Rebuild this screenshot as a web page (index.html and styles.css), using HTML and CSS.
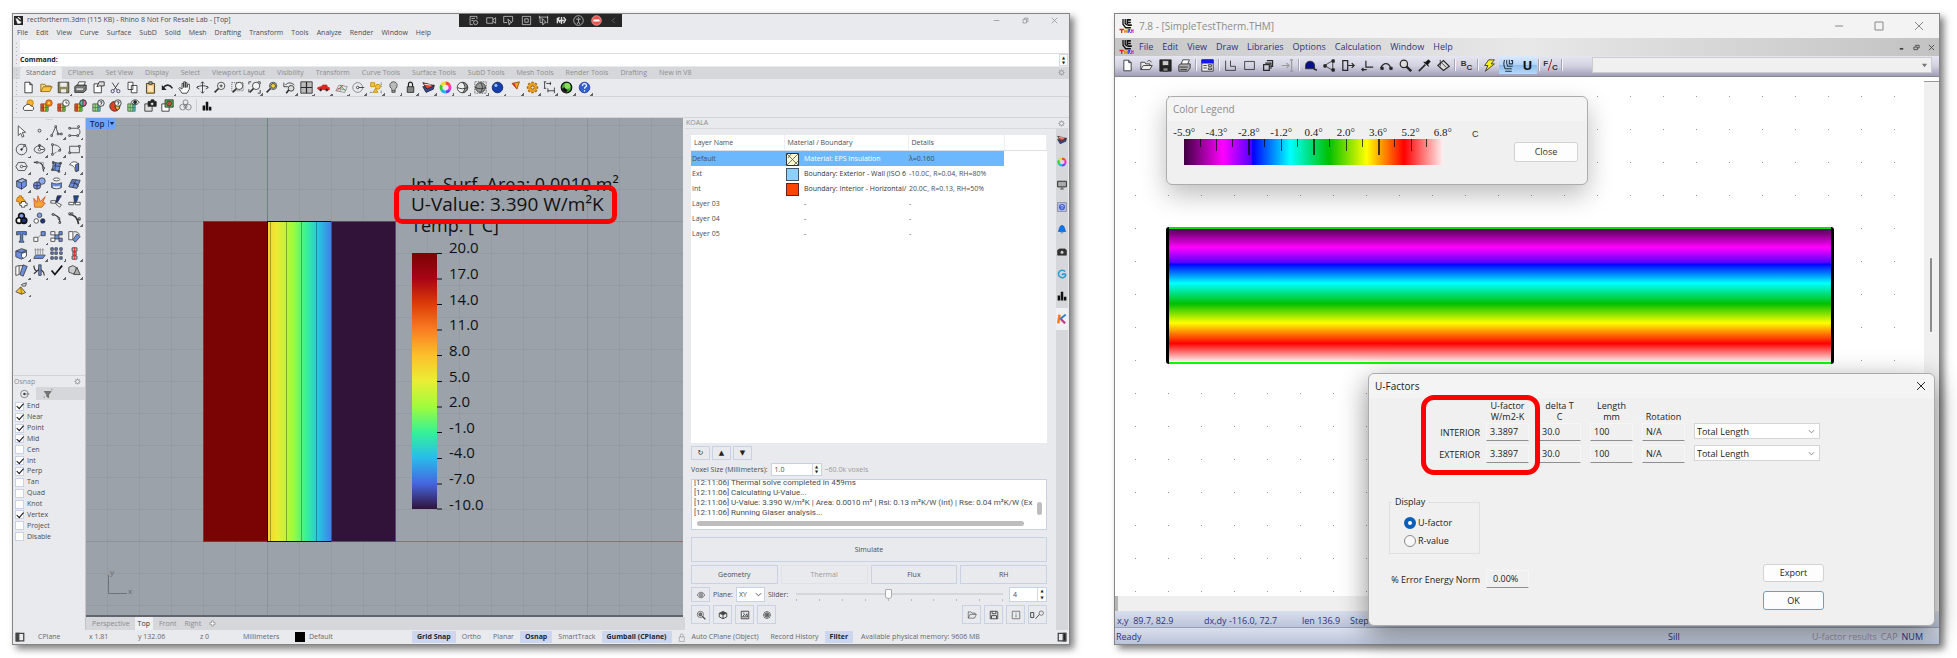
FILE: index.html
```html
<!DOCTYPE html>
<html lang="en">
<head>
<meta charset="utf-8">
<title>U-Value comparison: Rhino and THERM</title>
<link rel="stylesheet" href="styles.css">
</head>
<body>
<svg class="defs" aria-hidden="true">
  <symbol id="gear" viewBox="0 0 16 16"><circle cx="8" cy="8" r="4.500" fill="none" stroke="#999" stroke-width="2"/><path d="M8 1v3M8 12v3M1 8h3M12 8h3M3 3l2 2M11 11l2 2M13 3l-2 2M5 11l-2 2" stroke="#999" stroke-width="2"/></symbol>
  <symbol id="lens" viewBox="0 0 16 16"><circle cx="10" cy="6" r="4.500" fill="#f4f4f4" stroke="#333"/><path d="M6.800 9.200L2 14" stroke="#333" stroke-width="2"/></symbol>
  <symbol id="sheet" viewBox="0 0 16 16"><path d="M3.500 1.500h6l3 3v10h-9zM9.500 1.500v3h3" fill="#fff" stroke="#222"/></symbol>
  <symbol id="bars" viewBox="0 0 16 16"><path d="M1 7h4v8H1zM6 1h4v14H6zM11 9h4v6h-4z" fill="#111"/></symbol>
  <symbol id="mesh" viewBox="0 0 16 16"><path d="M1 6h9v9H1z" fill="#f4c531" stroke="#555"/><path d="M1 6h4v9H1z" fill="#d8452a"/><path d="M7 6h3v9H7z" fill="#4cb62e"/><path d="M1 10.500h9M4 6v9M7 6v9" stroke="#555" stroke-width=".7"/></symbol>
  <symbol id="coolmesh" viewBox="0 0 16 16"><path d="M1 6h9v9H1z" fill="#8edb7a" stroke="#555"/><path d="M7 6h3v9H7z" fill="#4ca8b0"/><path d="M1 10.500h9M4 6v9M7 6v9" stroke="#555" stroke-width=".7"/></symbol>
  <symbol id="wheel" viewBox="0 0 16 16"><g fill="none" stroke-width="3.500"><path d="M8 2.500a5.500 5.500 0 0 1 4.760 2.750" stroke="#f43"/><path d="M12.760 5.250a5.500 5.500 0 0 1 0 5.500" stroke="#f3b"/><path d="M12.760 10.750A5.500 5.500 0 0 1 8 13.500" stroke="#64f"/><path d="M8 13.500a5.500 5.500 0 0 1-4.760-2.750" stroke="#1bd"/><path d="M3.240 10.750a5.500 5.500 0 0 1 0-5.500" stroke="#3c3"/><path d="M3.240 5.250A5.500 5.500 0 0 1 8 2.500" stroke="#ed2"/></g></symbol>
  <symbol id="layers" viewBox="0 0 16 16"><path d="M1 7l4 7 9-4 1-5z" fill="#334a9a" stroke="#222"/><path d="M1 2l5 8 9-4-6-2z" fill="#e8452c" stroke="#222"/><path d="M3 4l8 1" stroke="#fff"/></symbol>
  <symbol id="lock" viewBox="0 0 16 16"><path d="M4 7h8v7H4z" fill="#888" stroke="#222"/><path d="M5.500 7V4a2.500 2.500 0 0 1 5 0v3" fill="none" stroke="#222" stroke-width="1.500"/></symbol>
  <symbol id="down" viewBox="0 0 8 8"><path d="M1 2.500L4 5.500 7 2.500" fill="none" stroke="currentColor"/></symbol>
  <symbol id="thermlogo" viewBox="0 0 16 16"><path d="M4 0v6l3 4h6M6.500 0v5l2 2" fill="none" stroke="#111" stroke-width="1.500"/><path d="M9 1h4M9 0v6M9 4h4M9 7h5" fill="none" stroke="#111" stroke-width="1.800"/><path d="M0 12h5M2.500 12v4" stroke="#e22" stroke-width="1.500"/><path d="M6 12v4M8.500 12v4M6 14h2.500" stroke="#d80" stroke-width="1.300"/><path d="M10 16v-4h2l-1 2 2 2" stroke="#22e" fill="none"/><path d="M13.500 16v-4l1 2 1-2v4" stroke="#c2c" fill="none"/></symbol>
</svg>

<main class="desk">
<section class="win rhino">
  <header class="r-title">
    <svg class="app" viewBox="0 0 16 16"><path d="M0 0h16v16H0z" fill="#222"/><path d="M2 3l5 2 2 3 5 2-3 4H6L4 9z" fill="#fff"/><path d="M7 2l5 4" stroke="#fff" stroke-width="2"/></svg>
    <span class="grow">rectfortherm.3dm (115 KB) - Rhino 8 Not For Resale Lab - [Top]</span>
    <div class="controls">
      <button aria-label="Minimize"><svg viewBox="0 0 10 10"><path d="M1 5h8"/></svg></button>
      <button aria-label="Restore"><svg viewBox="0 0 10 10"><path d="M1.500 3.500h5v5h-5zM3.500 3V1.500h5v5H7"/></svg></button>
      <button aria-label="Close"><svg viewBox="0 0 10 10"><path d="M1 1l8 8M9 1L1 9"/></svg></button>
    </div>
  </header>
  <div class="recorder">
    <svg viewBox="0 0 16 16"><path d="M13 6V2H3v12h4M5 5h5M5 8h3"/><circle cx="11" cy="11" r="3"/></svg>
    <svg viewBox="0 0 16 16"><path d="M1 4h9v8H1zM10 7l4-3v8l-4-3"/></svg>
    <svg viewBox="0 0 16 16"><path d="M6 11H1V2h13v8M7 6l6 5-3 .500-1 3z"/></svg>
    <svg viewBox="0 0 16 16"><path d="M2 2h12v12H2zM5.500 5.500h5v5h-5z"/></svg>
    <svg viewBox="0 0 16 16"><path d="M2 3h12v9M2 1v4M14 1v4M3 3v8h3M6 5l6 6-3 .500-2 3z"/></svg>
    <svg viewBox="0 0 16 16" class="bold"><path d="M2 4v8M5 3l-2 3 3 5M8 3v10M11 3l3 4-3 5M4 8h8"/></svg>
    <svg viewBox="0 0 16 16"><circle cx="8" cy="8" r="7"/><path d="M8 3v2M4.500 6h7M8 6v4M6 13l2-3 2 3"/></svg>
    <svg viewBox="0 0 16 16"><circle cx="8" cy="8" r="7" fill="#e8554d" stroke="#f6c0bc"/><path d="M3.500 8h9" stroke="#fff" stroke-width="3"/></svg>
    <svg viewBox="0 0 16 16" class="dim"><path d="M10 4L6 8l4 4"/></svg>
  </div>
  <nav class="r-menu"><a href="#">File</a><a href="#">Edit</a><a href="#">View</a><a href="#">Curve</a><a href="#">Surface</a><a href="#">SubD</a><a href="#">Solid</a><a href="#">Mesh</a><a href="#">Drafting</a><a href="#">Transform</a><a href="#">Tools</a><a href="#">Analyze</a><a href="#">Render</a><a href="#">Window</a><a href="#">Help</a></nav>
  <div class="command">
    <i class="grip"></i>
    <div class="cmd-box">
      <div class="cmd-history"></div>
      <div class="cmd-line"><label for="cmd">Command:</label><input id="cmd" type="text"><span class="spin"><button aria-label="Up">▲</button><button aria-label="Down">▼</button></span></div>
    </div>
  </div>
  <div class="r-tabs"><i class="grip"></i><button class="on">Standard</button><button>CPlanes</button><button>Set View</button><button>Display</button><button>Select</button><button>Viewport Layout</button><button>Visibility</button><button>Transform</button><button>Curve Tools</button><button>Surface Tools</button><button>SubD Tools</button><button>Mesh Tools</button><button>Render Tools</button><button>Drafting</button><button>New in V8</button><svg class="gear"><use href="#gear"/></svg></div>
  <div class="tools first"><i class="grip"></i>
    <div class="strip std">
      <button aria-label="New"><svg><use href="#sheet"/></svg></button>
      <button aria-label="Open"><svg viewBox="0 0 16 16"><path d="M1 13V4h5l1 2h6v2" fill="#f7e08a" stroke="#8a6410"/><path d="M1 13l3-6h11l-3 6z" fill="#f9c440" stroke="#8a6410"/></svg></button>
      <button aria-label="Save" class="f"><svg viewBox="0 0 16 16"><path d="M1.500 1.500h13v13h-13z" fill="#8e8a5e" stroke="#333"/><path d="M4 2h8v5H4zM5 10h6v4H5z" fill="#eee" stroke="none"/></svg></button>
      <button aria-label="Print"><svg viewBox="0 0 16 16"><path d="M4 6l2-5h8l-2 5" fill="#fff" stroke="#333"/><path d="M1 7l2-2h12v6l-3 3H1z" fill="#777" stroke="#222"/><path d="M3 9h8v2H3z" fill="#ddd" stroke="none"/></svg></button>
      <button aria-label="Properties"><svg viewBox="0 0 16 16"><path d="M2.500 3.500h9v11h-9z" fill="#fff" stroke="#222"/><path d="M9 1h6v5H9l-3 1z" fill="#ddd" stroke="#222"/></svg></button>
      <button aria-label="Cut"><svg viewBox="0 0 16 16"><path d="M4 2l6 9M12 2L6 11" stroke="#222"/><circle cx="4.500" cy="12.500" r="2" stroke="#336"/><circle cx="11.500" cy="12.500" r="2" stroke="#336"/></svg></button>
      <button aria-label="Copy"><svg viewBox="0 0 16 16"><path d="M2.500 1.500h6v9h-6zM6.500 5.500h7v9h-7z" fill="#fff"/></svg></button>
      <button aria-label="Paste"><svg viewBox="0 0 16 16"><path d="M3 3h10v12H3z" fill="#f3c64e"/><path d="M6 1h4v3H6z" fill="#aaa"/><path d="M5 6h6v7H5z" fill="#fbe9b4" stroke="none"/></svg></button>
      <button aria-label="Undo" class="f"><svg viewBox="0 0 16 16"><path d="M3 8c3-4 8-4 11 1" stroke-width="2"/><path d="M1 5v6h6z" fill="#222" stroke="none"/></svg></button>
      <button aria-label="Pan"><svg viewBox="0 0 16 16"><path d="M5 15L1 9l1-1 3 2V3h2v5V1h2v7V2h2v6l1-4h2v6l-3 5z" fill="#fff"/></svg></button>
      <button aria-label="Rotate view"><svg viewBox="0 0 16 16"><path d="M8 1v14M1 8c4-3 10-3 14 0M6 3l2-2 2 2M6 13l2 2 2-2M3 6L1 8l3 2M13 6l2 2-3 2"/></svg></button>
      <button aria-label="Zoom"><svg viewBox="0 0 16 16"><use href="#lens"/><path d="M8 6h4M10 4v4"/></svg></button>
      <button aria-label="Zoom window"><svg viewBox="0 0 16 16"><path d="M1 2h14v10H1z" stroke-dasharray="1 1.500"/><use href="#lens"/></svg></button>
      <button aria-label="Zoom extents" class="f"><svg viewBox="0 0 16 16"><use href="#lens"/><path d="M1 4V1h3M12 1h3v3M15 11v4h-3M1 10v4"/></svg></button>
      <button aria-label="Zoom selected"><svg viewBox="0 0 16 16"><use href="#lens"/><circle cx="10" cy="6" r="3" fill="#f1d32f"/></svg></button>
      <button aria-label="Undo view" class="f"><svg viewBox="0 0 16 16"><path d="M3 5c3-4 8-3 11 0M1 2v5h5"/><circle cx="10" cy="9" r="3.500" fill="#ddd"/><path d="M7 11l-3 4" stroke-width="2"/></svg></button>
      <button aria-label="Four views" class="f"><svg viewBox="0 0 16 16"><path d="M1 1h14v14H1z" fill="#bbb"/><path d="M8 1v14M1 8h14" stroke-width="1.500"/></svg></button>
      <button aria-label="Named view" class="f"><svg viewBox="0 0 16 16"><path d="M1 10V8l4-1 2-2h5l1 3h2v3z" fill="#e0251c" stroke="#c22"/><circle cx="4.500" cy="11" r="1.200" fill="#222"/><circle cx="12" cy="11" r="1.200" fill="#222"/></svg></button>
      <button aria-label="Set CPlane" class="f"><svg viewBox="0 0 16 16"><path d="M1 12L5 5l10 2-3 7zM3 9l10 2M8 6l-2 7" stroke="#888"/><path d="M2 12l8-7" stroke="#c33"/><path d="M6 5l7 7" stroke="#393"/></svg></button>
      <button aria-label="Object snap" class="f"><svg viewBox="0 0 16 16"><circle cx="7" cy="8" r="6" stroke="#777"/><path d="M7 8h8"/><circle cx="7" cy="8" r="1.500" fill="#fff"/></svg></button>
      <button aria-label="Select" class="f"><svg viewBox="0 0 16 16"><path d="M2 2h5v5H2zM5 14l3-5 3 5z" fill="#f5c52f" stroke="#c08a00"/><circle cx="11" cy="7" r="3" fill="#f5c52f" stroke="#c08a00"/><path d="M1 14h4M15 2v5M15 12v3" stroke-dasharray="1 1"/></svg></button>
      <button aria-label="Lights" class="f"><svg viewBox="0 0 16 16"><path d="M6 10C2 7 3 1 8 1s6 6 2 9v4H6z" fill="#bbb" stroke="#444"/><path d="M6 12h4" stroke="#333"/></svg></button>
      <button aria-label="Lock" class="f"><svg><use href="#lock"/></svg></button>
      <button aria-label="Layers" class="f"><svg><use href="#layers"/></svg></button>
      <button aria-label="Colors" class="f"><svg><use href="#wheel"/></svg></button>
      <button aria-label="Shaded" class="f"><svg viewBox="0 0 16 16"><circle cx="8" cy="8" r="6.500" fill="#eee"/><path d="M8 2c4 3 4 9 0 12a6 6 0 0 0 0-12z" fill="#aaa"/><path d="M2 8c3 2 9 2 12 0"/></svg></button>
      <button aria-label="Rendered" class="f"><svg viewBox="0 0 16 16"><path d="M1 1h14v14H1z" stroke-dasharray="1 1"/><circle cx="8" cy="8" r="6" fill="#999"/><path d="M2 8c3 2 9 2 12 0M8 2c3 3 3 9 0 12"/></svg></button>
      <button aria-label="Render" class="f"><svg viewBox="0 0 16 16"><circle cx="8" cy="8" r="6.500" fill="#163fae" stroke="#0a1c55"/><circle cx="6" cy="5.500" r="2" fill="#8fc0ff" stroke="none"/></svg></button>
      <button aria-label="Spotlight" class="f"><svg viewBox="0 0 16 16"><path d="M5 3l9-2-3 9z" fill="#f2a81d" stroke="#8a4a00"/><path d="M5 3l3-1 3 8z" fill="#d33" stroke="none"/></svg></button>
      <button aria-label="Options" class="f"><svg viewBox="0 0 16 16"><path d="M8 1v14M1 8h14M3 3l10 10M13 3L3 13" stroke="#a8690c" stroke-width="3"/><circle cx="8" cy="8" r="4.500" fill="#f0a629" stroke="#e89b1e" stroke-width="2"/><circle cx="8" cy="8" r="2" fill="#e9eaee" stroke="#7a4a00"/></svg></button>
      <button aria-label="Dimension" class="f"><svg viewBox="0 0 16 16"><path d="M2 1v8M1 1h3M1 9h3M4 3h6M9 1v4M6 9v5M14 8v7M6 12h8"/></svg></button>
      <button aria-label="Grasshopper" class="f"><svg viewBox="0 0 16 16"><circle cx="8" cy="8" r="6.500" fill="#3da52e" stroke="#111" stroke-width="1.500"/><path d="M2 10l4-2 3 4-3 2z" fill="#111"/><circle cx="9" cy="6" r="3.500" fill="#8fdc5e" stroke="none"/></svg></button>
      <button aria-label="Help" class="f"><svg viewBox="0 0 16 16"><circle cx="8" cy="8" r="6.500" fill="#3561d8" stroke="#1b3182"/><path d="M5.500 6c0-4 5-3 5-.500 0 2-2.500 2-2.500 4M8 11.500V13" stroke="#fff" stroke-width="1.500"/></svg></button>
    </div>
  </div>
  <div class="tools"><i class="grip"></i>
    <div class="strip ten">
      <button aria-label="Sun"><svg viewBox="0 0 16 16"><circle cx="10" cy="5" r="4" fill="#f9b52a" stroke="#c77d00"/><path d="M3 14a3 3 0 0 1 1-5.500 4 4 0 0 1 7 0 3 3 0 0 1 2 5.500z" fill="#fff"/></svg></button>
      <button aria-label="Sun study"><svg viewBox="0 0 16 16"><use href="#mesh"/><circle cx="11" cy="5" r="4" fill="#f58220" stroke="#a84a00"/><circle cx="11" cy="5" r="1.500" fill="#ffd34a" stroke="none"/></svg></button>
      <button aria-label="Hourly study"><svg viewBox="0 0 16 16"><use href="#mesh"/><circle cx="11" cy="5" r="4" fill="#fff"/><path d="M11 3v2h2"/></svg></button>
      <button aria-label="Color study"><svg viewBox="0 0 16 16"><use href="#mesh"/><circle cx="11" cy="5" r="4" fill="#48c9a0"/><path d="M11 1a4 4 0 0 1 0 8z" fill="#ef6a9b"/></svg></button>
      <button aria-label="Scheduled study"><svg viewBox="0 0 16 16"><use href="#coolmesh"/><circle cx="11" cy="5" r="4" fill="#eee"/><path d="M9.500 3.500h3L11 7"/></svg></button>
      <button aria-label="Peak study"><svg viewBox="0 0 16 16"><circle cx="7" cy="9" r="6" fill="#e2401f"/><path d="M7 9l6-2a6 6 0 0 1-3 7z" fill="#f4b22c"/><circle cx="11" cy="5" r="4" fill="#eee"/><path d="M9.500 3.500h3L11 7"/></svg></button>
      <button aria-label="View study"><svg viewBox="0 0 16 16"><use href="#coolmesh"/><path d="M5 4c3-4 7-4 10 0-3 4-7 4-10 0z" fill="#eee"/><circle cx="10" cy="4" r="1.800" fill="#222"/></svg></button>
      <button aria-label="Capture"><svg viewBox="0 0 16 16"><path d="M1 6h9v9H1z" fill="#ddd"/><path d="M5 3h3l1-2h3l1 2h2v6H5z" fill="#222"/><circle cx="10" cy="6" r="2" fill="#eee"/></svg></button>
      <button aria-label="Capture color"><svg viewBox="0 0 16 16"><path d="M1 6h9v9H1z" fill="#fff"/><path d="M5 1h10v9H5z" fill="#57b84b"/><circle cx="10" cy="5.500" r="3" fill="#ef6a3b"/><circle cx="10" cy="5.500" r="1" fill="#fff"/></svg></button>
      <button aria-label="Blend"><svg viewBox="0 0 16 16"><g stroke="#777"><circle cx="8" cy="4" r="3"/><circle cx="4.500" cy="10" r="3.500"/><circle cx="11.500" cy="10" r="3.500"/><circle cx="8" cy="9" r="2"/></g></svg></button>
    </div>
    <i class="rule"></i>
    <button class="solo" aria-label="Charts"><svg><use href="#bars"/></svg></button>
  </div>

  <div class="work">
    <aside class="side">
      <div class="dots">····</div>
      <div class="palette">
        <button aria-label="Pointer"><svg viewBox="0 0 16 16"><path d="M4 1v12l3-3 2 5 2-1-2-5h4z" fill="#fff"/></svg></button>
        <button aria-label="Point" class="f"><svg viewBox="0 0 16 16"><circle cx="8" cy="7" r="1.800"/></svg></button>
        <button aria-label="Polyline" class="f"><svg viewBox="0 0 16 16"><path d="M2 13L7 2l3 9h4"/><path d="M1 12h2v2H1zM6 1h2v2H6zM9 10h2v2H9zM13 10h2v2h-2z" fill="#fff"/></svg></button>
        <button aria-label="Curve" class="f"><svg viewBox="0 0 16 16"><path d="M2 4h9c5 0 5 9 0 9H3"/><path d="M1 3h2v2H1zM12 1h2v2h-2zM1 12h2v2H1zM11 12h2v2h-2z" fill="#fff"/></svg></button>
        <button aria-label="Circle" class="f"><svg viewBox="0 0 16 16"><circle cx="8" cy="8" r="6.500"/><path d="M8 8l4-5"/><circle cx="8" cy="8" r="1" fill="#222"/><path d="M11 2h2v2h-2z" fill="#fff"/></svg></button>
        <button aria-label="Ellipse" class="f"><svg viewBox="0 0 16 16"><ellipse cx="8" cy="8" rx="6.500" ry="4.500"/><path d="M8 3v5h6M7 2h2v2H7z"/><circle cx="8" cy="8" r="1.500" fill="#fff"/></svg></button>
        <button aria-label="Arc" class="f"><svg viewBox="0 0 16 16"><path d="M3 2c8 0 12 6 9 7M3 2v12"/><path d="M3 14l9-5" stroke-dasharray="1 1"/><path d="M2 1h2v2H2zM11 8h2v2h-2zM2 13h2v2H2z" fill="#fff"/></svg></button>
        <button aria-label="Rectangle" class="f"><svg viewBox="0 0 16 16"><path d="M2 4h12v8H2z"/><path d="M1 11h2v2H1zM13 3h2v2h-2z" fill="#fff"/></svg></button>
        <button aria-label="Polygon" class="f"><svg viewBox="0 0 16 16"><path d="M4 3h8l3 5-3 5H4L1 8z"/><path d="M8 8h6"/><circle cx="8" cy="8" r="1.500" fill="#fff"/></svg></button>
        <button aria-label="Fillet" class="f"><svg viewBox="0 0 16 16"><path d="M1 3h5c5 0 7 3 7 11" stroke-width="1.500"/><path d="M6 3h7v6" stroke="#999"/><path d="M4 2h2v2H4zM12 9h2v2h-2z" fill="#fff"/></svg></button>
        <button aria-label="Surface" class="f"><svg viewBox="0 0 16 16"><path d="M4 3l9 1-2 10-8-2z" fill="#6d8fe0"/><path d="M3 2h2v2H3zM12 3h2v2h-2zM10 13h2v2h-2zM2 11h2v2H2zM5 7l8 1M7 3l-1 9"/></svg></button>
        <button aria-label="Revolve" class="f"><svg viewBox="0 0 16 16"><path d="M2 6c2-5 10-5 11 0v7l-4 1c0-5-3-8-7-8z" fill="#fff"/><path d="M9 6l4-2v9l-3 1z" fill="#5477d4"/></svg></button>
        <button aria-label="Box" class="f"><svg viewBox="0 0 16 16"><path d="M2 5l7-3 5 2v7l-6 4-6-3z" fill="#6d8fe0"/><path d="M2 5l6 2 6-3-5-2z" fill="#a9c0f5"/><path d="M8 7v8"/></svg></button>
        <button aria-label="Spheres" class="f"><svg viewBox="0 0 16 16"><circle cx="11" cy="5" r="4" fill="#8fabef"/><circle cx="5" cy="10.500" r="4.500" fill="#6d8fe0"/><path d="M1 10c3 1 6 1 8 0M5 6v9"/></svg></button>
        <button aria-label="Cylinder" class="f"><svg viewBox="0 0 16 16"><ellipse cx="8" cy="3" rx="4" ry="1.800" fill="#fff"/><path d="M2 7c3 2 9 2 12 0v6c-3 2-9 2-12 0z" fill="#6d8fe0"/><path d="M4 11c3 1 5 1 8 0v2c-3 1-5 1-8 0z" fill="#fff" stroke="none"/></svg></button>
        <button aria-label="Plane" class="f"><svg viewBox="0 0 16 16"><path d="M5 3l10 1-4 10-10-2z" fill="#6d8fe0"/><path d="M3 7l10 2M10 3L6 13M5 4l8 8"/></svg></button>
        <button aria-label="Boolean" class="f"><svg viewBox="0 0 16 16"><path d="M3 3h2V1h3v2h2v3h2v3h-3v2H5V8H2V6z" fill="#f5a623" stroke="#b06a00"/><path d="M8 8h5v2h2v3h-3v2H8v-2H6v-3h2z" fill="#fff"/></svg></button>
        <button aria-label="Explode"><svg viewBox="0 0 16 16"><path d="M2 15L1 4l4 5 1-8 3 7 6-6-3 7 3 1-4 5z" fill="#f4a437" stroke="#d2552a"/></svg></button>
        <button aria-label="Trim"><svg viewBox="0 0 16 16"><path d="M9 1h5L9 9H7z" fill="#1c2f80"/><path d="M1 7h6v3H1zM8 9l6 3-2 3-5-4z" fill="#fff"/></svg></button>
        <button aria-label="Split"><svg viewBox="0 0 16 16"><path d="M7 1h6l-3 9H8z" fill="#1c4a9a"/><path d="M1 9h6v3H1zM9 9h6v3H9z" fill="#fff"/></svg></button>
        <button aria-label="Group" class="f"><svg viewBox="0 0 16 16"><g stroke="#111" stroke-width="2"><circle cx="8" cy="5" r="3.500" fill="#7fa0ee"/><circle cx="5" cy="10.500" r="3.500" fill="#fff"/><circle cx="11" cy="10.500" r="3.500" fill="#1c2f80"/></g></svg></button>
        <button aria-label="Ungroup"><svg viewBox="0 0 16 16"><circle cx="8" cy="4" r="2.800" fill="#7fa0ee"/><circle cx="4" cy="11" r="2.800" fill="#fff"/><circle cx="12" cy="11" r="2.800" fill="#1c2f80"/></svg></button>
        <button aria-label="Edit points"><svg viewBox="0 0 16 16"><path d="M2 3c6 0 11 4 10 11" stroke-width="1.500"/><path d="M3 2h2v2H3zM10 7h2v2h-2zM11 12h2v2h-2z" fill="#fff"/></svg></button>
        <button aria-label="Control points" class="f"><svg viewBox="0 0 16 16"><path d="M1 3c7 0 11 4 12 12" stroke-width="2"/><path d="M1 1h2v2H1zM4 1h2v2H4zM10 9h5M13 7h2v3h-2z" fill="#fff"/></svg></button>
        <button aria-label="Text"><svg viewBox="0 0 16 16"><path d="M2 2h12v4h-2l-1-1H9.500v8l1.500 1v1H5v-1l1.500-1V5H5L4 6H2z" fill="#5b82e0"/></svg></button>
        <button aria-label="Move" class="f"><svg viewBox="0 0 16 16"><path d="M1 9h5v5H1z" fill="#fff"/><path d="M10 2h5v5h-5z" fill="#6d8fe0"/><path d="M6 9l4-3" stroke-dasharray="1 1"/></svg></button>
        <button aria-label="Copy objects"><svg viewBox="0 0 16 16"><path d="M1 2h5v4H1zM1 10h5v4H1z" fill="#fff"/><path d="M6 6h5v5H6zM11 2h4v4h-4zM11 10h4v4h-4z" fill="#6d8fe0"/></svg></button>
        <button aria-label="Rotate"><svg viewBox="0 0 16 16"><path d="M1 2h5v10H1z" fill="#fff"/><path d="M11 5l4 3-6 7-3-3z" fill="#6d8fe0"/><path d="M7 2c4 0 6 1 7 4"/></svg></button>
        <button aria-label="Solid edit" class="f"><svg viewBox="0 0 16 16"><path d="M1 5l7-3 6 2v7l-6 4-7-3z" fill="#6d8fe0"/><path d="M8 8l6-2v5l-3 3-3-2z" fill="#fff"/><path d="M1 5l7 2 6-3"/></svg></button>
        <button aria-label="Extrude" class="f"><svg viewBox="0 0 16 16"><path d="M3 10h12l-3 4H1z" fill="#6d8fe0"/><path d="M3 11V3M6 11V3M9 11V3M12 11V3M2 4l1-2 1 2M5 4l1-2 1 2M8 4l1-2 1 2M11 4l1-2 1 2" stroke="#888"/></svg></button>
        <button aria-label="Array" class="f"><svg viewBox="0 0 16 16"><path d="M1 1h3v3H1zM6 1h3v3H6zM12 1h3v3h-3zM1 6h3v3H1zM6 6h3v3H6zM12 6h3v3h-3zM1 12h3v3H1zM6 12h3v3H6zM12 12h3v3h-3z" fill="#6d8fe0"/></svg></button>
        <button aria-label="Align" class="f"><svg viewBox="0 0 16 16"><path d="M5 1h6v4H5zM6 6h4v4H6zM5 11h6v4H5z" fill="#bbb"/><path d="M8 0v16" stroke="#e22"/></svg></button>
        <button aria-label="Shear" class="f"><svg viewBox="0 0 16 16"><path d="M1 3l4-1v11l-4 1z" fill="#fff"/><path d="M10 1l5 2-5 12-4-2z" fill="#6d8fe0"/><path d="M5 2h5"/></svg></button>
        <button aria-label="Curve tools" class="f"><svg viewBox="0 0 16 16"><path d="M1 2c1 8 5 8 7 3 2 4 6 3 6 9M1 12l6-5" stroke-width="1.500"/><path d="M7 1h3v13H7z" fill="#6d8fe0"/></svg></button>
        <button aria-label="Check" class="f"><svg viewBox="0 0 16 16"><path d="M2 8l4 5 9-11" stroke="#111" stroke-width="2"/></svg></button>
        <button aria-label="Solids" class="f"><svg viewBox="0 0 16 16"><path d="M1 4l5-2 4 2v6l-4 2-5-2z" fill="#ccc"/><path d="M11 4l4 9H7z" fill="#aaa"/></svg></button>
        <button aria-label="Pyramid" class="f"><svg viewBox="0 0 16 16"><path d="M7 6l6 7-5 2-7-3z" fill="#f4c531"/><path d="M7 6l1 9" stroke="#8a6410"/><path d="M8 3l6-2-1 4H9z" fill="#ddd"/></svg></button>
      </div>
      <section class="osnap">
        <header>Osnap<svg class="gear"><use href="#gear"/></svg></header>
        <div class="osnap-tabs"><button class="on" aria-label="Snaps"><svg viewBox="0 0 16 16"><circle cx="7" cy="8" r="6"/><circle cx="7" cy="8" r="1.500" fill="#222"/><path d="M8 8h7"/></svg></button><button aria-label="Filter"><svg viewBox="0 0 16 16"><path d="M2 4h11L9 9v5l-3-2V9z" fill="#777"/><path d="M1 13h2M13 1h2"/></svg></button></div>
        <div class="checks">
          <label><input type="checkbox" checked>End</label><label><input type="checkbox" checked>Near</label><label><input type="checkbox" checked>Point</label><label><input type="checkbox" checked>Mid</label><label><input type="checkbox">Cen</label><label><input type="checkbox" checked>Int</label><label><input type="checkbox" checked>Perp</label><label><input type="checkbox">Tan</label><label><input type="checkbox">Quad</label><label><input type="checkbox">Knot</label><label><input type="checkbox" checked>Vertex</label><label><input type="checkbox">Project</label><label><input type="checkbox">Disable</label>
        </div>
      </section>
    </aside>

    <div class="center">
      <div class="viewport">
        <svg class="scene" role="img" aria-label="Thermal section with temperature legend">
          <defs>
            <pattern id="minor" x="21" y="7" width="32" height="32" patternUnits="userSpaceOnUse"><path d="M.500 0v32M0 .500h32" stroke="#969ba3"/></pattern>
            <pattern id="major" x="181" y="103" width="320" height="320" patternUnits="userSpaceOnUse"><path d="M.500 0v320M0 .500h320" stroke="#8e939b"/></pattern>
            <linearGradient id="section"><stop offset="0" stop-color="#f5d22f"/><stop offset=".14" stop-color="#eeea33"/><stop offset=".4" stop-color="#9dfb3d"/><stop offset=".6" stop-color="#38f295"/><stop offset=".8" stop-color="#27c4e4"/><stop offset="1" stop-color="#417fe6"/></linearGradient>
            <linearGradient id="scale" x2="0" y2="1"><stop offset="0" stop-color="#7a0403"/><stop offset=".1" stop-color="#a80416"/><stop offset=".2" stop-color="#dd3d08"/><stop offset=".3" stop-color="#f97e22"/><stop offset=".4" stop-color="#fbc02b"/><stop offset=".5" stop-color="#eaee35"/><stop offset=".6" stop-color="#a1fb3c"/><stop offset=".7" stop-color="#35f296"/><stop offset=".8" stop-color="#28bceb"/><stop offset=".9" stop-color="#4666e0"/><stop offset="1" stop-color="#30123b"/></linearGradient>
          </defs>
          <rect width="100%" height="100%" fill="url(#minor)" stroke="none"/>
          <rect width="100%" height="100%" fill="url(#major)" stroke="none"/>
          <path d="M181.500 0v103" stroke="#4d9a55"/>
          <path d="M310 423.500h2000" stroke="#a0686d"/>
          <rect x="117.500" y="103.500" width="64" height="320" fill="#7a0403" stroke="#c2152b"/>
          <rect x="181.500" y="103.500" width="64" height="320" fill="url(#section)" stroke="#111"/>
          <path d="M184.500 104v319M200.500 104v319M215.500 104v319M230.500 104v319" stroke="#000" stroke-opacity=".3"/>
          <rect x="245.500" y="103.500" width="64" height="320" fill="#311239" stroke="#7a2bb5"/>
          <rect x="326" y="135" width="25" height="256" fill="url(#scale)" stroke="none"/>
          <path d="M351 135.500h5M351 161h5M351 186.500h5M351 212h5M351 237.500h5M351 263.500h5M351 289h5M351 314.500h5M351 340.500h5M351 366h5M351 391h5" stroke="#111"/>
          <path d="M22.500 457v18.500H41" stroke="#6f747c" fill="none"/>
          <g class="axis"><text x="24" y="457">y</text><text x="42" y="476">x</text></g>
          <g class="head"><text x="325" y="73">Int. Surf. Area: 0.0010 m²</text><text class="uval" x="325" y="93">U-Value: 3.390 W/m²K</text><text x="325" y="114">Temp. [°C]</text></g>
          <g class="ticks"><text x="363" y="135">20.0</text><text x="363" y="161">17.0</text><text x="363" y="187">14.0</text><text x="363" y="212">11.0</text><text x="363" y="238">8.0</text><text x="363" y="264">5.0</text><text x="363" y="289">2.0</text><text x="363" y="315">-1.0</text><text x="363" y="340">-4.0</text><text x="363" y="366">-7.0</text><text x="363" y="392">-10.0</text></g>
          <rect x="310.500" y="69.500" width="218" height="34" rx="6" fill="none" stroke="#f00" stroke-width="5"/>
        </svg>
        <button class="view-name">Top<svg viewBox="0 0 8 8"><path d="M1 2h6L4 6z"/></svg></button>
      </div>
      <div class="view-tabs"><button>Perspective</button><button class="on">Top</button><button>Front</button><button>Right</button><button aria-label="New view"><svg viewBox="0 0 8 8"><path d="M3 1h2v2h2v2H5v2H3V5H1V3h2z"/></svg></button></div>
    </div>

    <aside class="koala">
      <header>KOALA<svg class="gear"><use href="#gear"/></svg></header>
      <div class="k-main">
        <div class="k-body">
          <div class="k-list">
            <table>
              <colgroup><col class="c1"><col class="c2"><col class="c3"><col></colgroup>
              <thead><tr><th>Layer Name</th><th>Material / Boundary</th><th>Details</th><th></th></tr></thead>
              <tbody>
                <tr class="sel"><td>Default</td><td class="mat"><svg viewBox="0 0 13 13"><path d="M.500.500h12v12H.500z" fill="#fdf8cf" stroke="#333"/><path d="M1 1l11 11M12 1L1 12M2 5l3-4M8 12l4-4" stroke="#555" stroke-width=".8" fill="none"/></svg>Material: EPS Insulation</td><td>λ=0.160</td><td></td></tr>
                <tr><td>Ext</td><td class="mat"><i class="sw sky"></i>Boundary: Exterior - Wall (ISO 6</td><td>-10.0C, R=0.04, RH=80%</td><td></td></tr>
                <tr><td>Int</td><td class="mat"><i class="sw fire"></i>Boundary: Interior - Horizontal/</td><td>20.0C, R=0.13, RH=50%</td><td></td></tr>
                <tr><td>Layer 03</td><td class="mat"><i class="sw"></i>-</td><td>-</td><td></td></tr>
                <tr><td>Layer 04</td><td class="mat"><i class="sw"></i>-</td><td>-</td><td></td></tr>
                <tr><td>Layer 05</td><td class="mat"><i class="sw"></i>-</td><td>-</td><td></td></tr>
              </tbody>
            </table>
          </div>
          <div class="k-row order"><button aria-label="Refresh">↻</button><button aria-label="Move up">▲</button><button aria-label="Move down">▼</button></div>
          <div class="k-row voxel"><label for="vox">Voxel Size (Millimeters):</label><span class="num"><input id="vox" type="text" value="1.0"><span class="spin"><button aria-label="More">▲</button><button aria-label="Less">▼</button></span></span><span class="hint">~60.0k voxels</span></div>
          <div class="log">
            <div class="log-text"><p>[12:11:06] Thermal solve completed in 459ms</p><p>[12:11:06] Calculating U-Value...</p><p>[12:11:06] U-Value: 3.390 W/m²K | Area: 0.0010 m² | Rsi: 0.13 m²K/W (Int) | Rse: 0.04 m²K/W (Ex</p><p>[12:11:06] Running Glaser analysis...</p></div>
            <div class="vbar"><i></i></div>
            <div class="hbar"><i></i></div>
          </div>
          <button class="simulate">Simulate</button>
          <div class="quad"><button>Geometry</button><button disabled>Thermal</button><button>Flux</button><button>RH</button></div>
          <div class="k-row plane">
            <button class="sq" aria-label="Show"><svg viewBox="0 0 16 16"><path d="M2 8c3-6 9-6 12 0-3 6-9 6-12 0z"/><circle cx="8" cy="8" r="3"/><circle cx="8" cy="8" r="1"/></svg></button>
            <label for="pl">Plane:</label><span class="pick"><select id="pl"><option>XY</option></select><svg><use href="#down"/></svg></span>
            <label for="sl">Slider:</label>
            <span class="slide"><input id="sl" type="range" min="0" max="9" value="4"><span class="notches"><i></i><i></i><i></i><i></i><i></i><i></i><i></i><i></i><i></i><i></i></span></span>
            <span class="num"><input type="text" value="4" aria-label="Slider value"><span class="spin"><button aria-label="More">▲</button><button aria-label="Less">▼</button></span></span>
          </div>
          <div class="k-row acts">
            <button aria-label="Inspect"><svg viewBox="0 0 16 16"><circle cx="7" cy="7" r="5"/><circle cx="7" cy="7" r="2.500" fill="#777"/><path d="M10 10l5 5" stroke-width="2"/></svg></button>
            <button aria-label="Volume"><svg viewBox="0 0 16 16"><path d="M2 5l6-3 6 3-6 3z" fill="#444"/><path d="M2 5v6l6 3 6-3V5M8 8v6" stroke-width="1.500"/></svg></button>
            <button aria-label="Image"><svg viewBox="0 0 16 16"><path d="M2 2h12v12H2zM4 11l3-4 2 2 2-3 1 5zM5 5h2" stroke-width="1.500"/></svg></button>
            <button aria-label="Settings"><svg viewBox="0 0 16 16"><circle cx="8" cy="8" r="5.500"/><circle cx="8" cy="8" r="3"/><path d="M8 2v12M2 8h12M4 4l8 8M12 4l-8 8"/></svg></button>
            <span class="grow"></span>
            <button aria-label="Open file"><svg viewBox="0 0 16 16"><path d="M2 13V3h4l2 2h5v2M2 13l3-6h10l-3 6z"/></svg></button>
            <button aria-label="Save file"><svg viewBox="0 0 16 16"><path d="M2 2h11l1 1v11H2zM5 2v4h6V2M4 14V9h8v5" stroke-width="1.500"/></svg></button>
            <button aria-label="Info"><svg viewBox="0 0 16 16"><path d="M2 2h12v12H2zM8 4v1.500M8 7v5"/></svg></button>
            <button aria-label="License"><svg class="wide" viewBox="0 0 24 16"><path d="M1 4h5v8H1zM9 14l6-7" stroke-width="1.500"/><circle cx="18" cy="5" r="3.500"/></svg></button>
          </div>
        </div>
        <div class="k-tabs">
          <button aria-label="Layers"><svg><use href="#layers"/></svg></button>
          <button aria-label="Materials"><svg><use href="#wheel"/></svg></button>
          <button aria-label="Display"><svg viewBox="0 0 16 16"><path d="M1 2h14v9H1z" fill="#aaa" stroke-width="1.500"/><path d="M6 13h4M5 14.500h6"/></svg></button>
          <button aria-label="Help"><svg viewBox="0 0 16 16"><path d="M1 1h14v14H1z" fill="#b9c5ee" stroke="#667"/><circle cx="8" cy="8" r="5" fill="#4a63d2" stroke="none"/><path d="M6 7c0-2 4-2 4 0L8 9v2" stroke="#fff"/></svg></button>
          <button aria-label="Notifications"><svg viewBox="0 0 16 16"><path d="M2 12c2-2 1-9 6-10 5 1 4 8 6 10z" fill="#0b74f0" stroke="#0b56b8"/><path d="M6 14h4" stroke="#0b56b8"/></svg></button>
          <button aria-label="Snapshots"><svg viewBox="0 0 16 16"><path d="M1 5l3-2h9l2 2v8H1z" fill="#333"/><circle cx="8" cy="8.500" r="3" fill="#ccc"/></svg></button>
          <button aria-label="Cloud"><svg viewBox="0 0 16 16"><path d="M13 4a6 6 0 1 0 1 6c0-3-5-3-6 0" stroke="#2c9bd2" stroke-width="2.500"/></svg></button>
          <button aria-label="Charts"><svg><use href="#bars"/></svg></button>
          <button aria-label="Koala" class="on"><svg viewBox="0 0 16 16"><path d="M4 1L2 15" stroke="#f47a1f" stroke-width="4"/><path d="M14 1L5 8" stroke="#2a7ac9" stroke-width="3"/><path d="M6 8l7 7" stroke="#c0398a" stroke-width="3.500"/></svg></button>
        </div>
      </div>
    </aside>
  </div>
  <footer class="r-status">
    <div class="coords"><svg class="pane" viewBox="0 0 16 16"><path d="M2 2h12v12H2z"/><path d="M2 2h4v12H2z" fill="#444"/></svg><span>CPlane</span><span>x 1.81</span><span>y 132.06</span><span>z 0</span><span>Millimeters</span><i class="ink"></i><span>Default</span></div>
    <div class="modes"><button class="on">Grid Snap</button><button>Ortho</button><button>Planar</button><button class="on">Osnap</button><button>SmartTrack</button><button class="on">Gumball (CPlane)</button><svg class="lk" viewBox="0 0 16 16"><path d="M4 7h9v8H4zM6 7V4a2.500 2.500 0 0 1 5 0v3"/></svg><button>Auto CPlane (Object)</button><button>Record History</button><button class="on">Filter</button><span>Available physical memory: 9606 MB</span></div>
    <svg class="pane" viewBox="0 0 16 16"><path d="M2 2h12v12H2z"/><path d="M10 2h4v12h-4z" fill="#222"/></svg>
  </footer>
</section>

<section class="win therm">
  <header class="t-title">
    <svg class="logo"><use href="#thermlogo"/></svg><span class="grow">7.8 - [SimpleTestTherm.THM]</span>
    <div class="controls big">
      <button aria-label="Minimize"><svg viewBox="0 0 10 10"><path d="M1 5h8"/></svg></button>
      <button aria-label="Maximize"><svg viewBox="0 0 10 10"><path d="M1 1h8v8H1z"/></svg></button>
      <button aria-label="Close"><svg viewBox="0 0 10 10"><path d="M1 1l8 8M9 1L1 9"/></svg></button>
    </div>
  </header>
  <nav class="t-menu"><svg class="logo"><use href="#thermlogo"/></svg><a href="#">File</a><a href="#">Edit</a><a href="#">View</a><a href="#">Draw</a><a href="#">Libraries</a><a href="#">Options</a><a href="#">Calculation</a><a href="#">Window</a><a href="#">Help</a>
    <div class="mdi"><svg viewBox="0 0 8 8"><path d="M2 5.500h4" stroke-width="2"/></svg><svg viewBox="0 0 8 8"><path d="M1 3.500h4v3H1zM3 3V1.500h4v3H5"/></svg><svg viewBox="0 0 8 8"><path d="M1 1l6 6M7 1L1 7"/></svg></div>
  </nav>
  <div class="t-tools">
    <button aria-label="New"><svg><use href="#sheet"/></svg></button>
    <button aria-label="Open"><svg viewBox="0 0 16 16"><path d="M1 13V4h5l1 2h5v2M1 13l3-5h11l-3 5zM9 3c2-2 4-1 5 1" fill="#eee"/></svg></button>
    <button aria-label="Save"><svg viewBox="0 0 16 16"><path d="M1 1h14v14H1z" fill="#222"/><path d="M4 2h8v6H4z" fill="#ccc"/><path d="M5 11h6v4H5z" fill="#888"/></svg></button>
    <button aria-label="Print"><svg viewBox="0 0 16 16"><path d="M4 6l2-5h8l-2 5" fill="#fff"/><path d="M1 8l2-2h12v5l-3 4H1z" fill="#aaa"/><path d="M2 10h10M3 13h8"/></svg></button>
    <i></i>
    <button aria-label="Library"><svg viewBox="0 0 16 16"><path d="M1 1h14v14H1z" fill="#eee"/><path d="M1 1h14v4H1z" fill="#1218f0" stroke="#1218f0"/><path d="M3 8h4M3 11h4M9 7h4v2H9zM9 11h4v2H9z"/></svg></button>
    <i></i>
    <button aria-label="Polygon"><svg viewBox="0 0 16 16"><path d="M2 2v12h12V9H8V2"/></svg></button>
    <button aria-label="Rectangle"><svg viewBox="0 0 16 16"><path d="M2 3h12v10H2z"/></svg></button>
    <button aria-label="Repeat"><svg viewBox="0 0 16 16"><path d="M2 7h7v7H2zM4 5h7v7M6 2h7v7h-2" stroke-width="1.500"/></svg></button>
    <button aria-label="Insert point"><svg viewBox="0 0 16 16"><path d="M1 8h8M7 5l3 3-3 3M13 1v14M11 1h4M11 15h4" stroke="#999" stroke-width="1.500"/></svg></button>
    <i></i>
    <button aria-label="Fill void"><svg viewBox="0 0 16 16"><path d="M2 12V8c0-7 11-7 11 0v4z" fill="#0a0f8a"/><path d="M12 12l4 2" stroke-width="2"/></svg></button>
    <button aria-label="Edit points"><svg viewBox="0 0 16 16"><path d="M2 8l10-6v12z"/><path d="M11 1h3v3h-3zM11 12h3v3h-3zM1 7h3v3H1z" fill="#222"/></svg></button>
    <button aria-label="Move"><svg viewBox="0 0 16 16"><path d="M1 2h6v12H1zM7 8h8M12 5l3 3-3 3" stroke-width="1.500"/></svg></button>
    <button aria-label="Origin"><svg viewBox="0 0 16 16"><path d="M6 2v8h9M1 13h6M3 11l-2 2 2 2" stroke-width="1.500"/></svg></button>
    <button aria-label="Curve"><svg viewBox="0 0 16 16"><path d="M1 11c3-7 10-7 12 0" stroke-width="1.500"/><path d="M1 10h3v3H1zM12 10h3v3h-3z" fill="#222"/></svg></button>
    <button aria-label="Zoom"><svg viewBox="0 0 16 16"><circle cx="6" cy="6" r="4.500" fill="#ddd" stroke-width="1.500"/><path d="M9 9l6 6" stroke-width="3"/></svg></button>
    <button aria-label="Pick"><svg viewBox="0 0 16 16"><path d="M1 15l8-8" stroke-width="2"/><path d="M9 4l4-3 2 2-3 4 1 2-6-5z" fill="#111"/></svg></button>
    <button aria-label="Paint"><svg viewBox="0 0 16 16"><path d="M1 8l7-6 7 7-7 5z" fill="#ddd" stroke-width="1.500"/><path d="M6 5l5 5M4 1v8"/></svg></button>
    <i></i>
    <button aria-label="Boundary conditions"><span class="duo"><b>B</b><b>C</b></span></button>
    <i></i>
    <button aria-label="Calculate"><svg viewBox="0 0 16 16"><path d="M7 1h7l-4 5h4L3 15l3-7H2z" fill="#f7ee22"/></svg></button>
    <button aria-label="Show results" class="lit"><svg viewBox="0 0 16 16"><path d="M3 1c-1 4-1 8 1 11h8M6 1c-1 3 0 6 1 8h6M9 1v5h4V2h-2M4 15h8" stroke="#234" stroke-width="1.300"/></svg></button>
    <button aria-label="U-factors" class="lit"><b class="u">U</b></button>
    <i></i>
    <button aria-label="Units"><span class="duo"><b>F</b><svg class="slash" viewBox="0 0 4 12"><path d="M4 0L0 12" stroke="#b22"/></svg><b>C</b></span></button>
    <i></i>
    <span class="pick combo"><select aria-label="Selection"><option></option></select><svg viewBox="0 0 8 8"><path d="M1 2h6L4 6z" fill="#777"/></svg></span>
  </div>
  <div class="t-canvas">
    <div class="sheet"><div class="slab"></div></div>
    <div class="t-vbar"><i></i></div>
  </div>
  <div class="t-hbar"></div>
  <div class="t-info"><span>x,y&nbsp; 89.7, 82.9</span><span>dx,dy -116.0, 72.7</span><span>len 136.9</span><span>Step</span></div>
  <footer class="t-status"><span class="grow">Ready</span><span class="sill">Sill</span><span class="off">U-factor results</span><span class="off">CAP</span><span>NUM</span></footer>

  <section class="dialog legend">
    <header>Color Legend</header>
    <div class="legend-body">
      <div class="legend-scale">
        <div class="degrees"><span>-5.9°</span><span>-4.3°</span><span>-2.8°</span><span>-1.2°</span><span>0.4°</span><span>2.0°</span><span>3.6°</span><span>5.2°</span><span>6.8°</span></div>
        <svg class="spectrum" viewBox="0 0 259 26" preserveAspectRatio="none"><defs><linearGradient id="spec"><stop offset="0" stop-color="#400040"/><stop offset=".15" stop-color="#f0f"/><stop offset=".26" stop-color="#50f"/><stop offset=".265" stop-color="#00f"/><stop offset=".41" stop-color="#0ff"/><stop offset=".56" stop-color="#00c000"/><stop offset=".705" stop-color="#ff0"/><stop offset=".85" stop-color="#f00"/><stop offset="1" stop-color="#fff0f0"/></linearGradient></defs><rect width="259" height="26" fill="url(#spec)"/><g stroke="#000" stroke-opacity=".7"><path d="M16.500 0v8M48.500 0v8M80.500 0v8M113.500 0v8M145.500 0v8M178.500 0v8M210.500 0v8M242.500 0v8M32.500 0v12M97.500 0v12M162.500 0v12M227.500 0v12"/><path d="M65 0v16M130 0v16M195 0v16" stroke-width="2"/></g></svg>
      </div>
      <span class="unit">C</span>
      <button class="btn">Close</button>
    </div>
  </section>

  <section class="dialog ufactors">
    <header>U-Factors<button aria-label="Close"><svg viewBox="0 0 10 10"><path d="M1 1l8 8M9 1L1 9"/></svg></button></header>
    <div class="u-body">
      <div class="u-grid">
        <span></span><span class="h">U-factor<br>W/m2-K</span><span class="h">delta T<br>C</span><span class="h">Length<br>mm</span><span class="h">Rotation</span><span></span>
        <label for="ui">INTERIOR</label><input id="ui" readonly value="3.3897"><input readonly aria-label="Interior delta T" value="30.0"><input readonly aria-label="Interior length" value="100"><input readonly aria-label="Interior rotation" value="N/A"><span class="pick"><select aria-label="Interior basis"><option>Total Length</option></select><svg><use href="#down"/></svg></span>
        <label for="ue">EXTERIOR</label><input id="ue" readonly value="3.3897"><input readonly aria-label="Exterior delta T" value="30.0"><input readonly aria-label="Exterior length" value="100"><input readonly aria-label="Exterior rotation" value="N/A"><span class="pick"><select aria-label="Exterior basis"><option>Total Length</option></select><svg><use href="#down"/></svg></span>
      </div>
      <fieldset><legend>Display</legend><label><input type="radio" name="d" checked>U-factor</label><label><input type="radio" name="d">R-value</label></fieldset>
      <div class="u-foot">
        <label for="er">% Error Energy Norm</label><input id="er" readonly value="0.00%">
        <div class="u-btns"><button class="btn">Export</button><button class="btn ok">OK</button></div>
      </div>
    </div>
    <div class="mark"></div>
  </section>
</section>
</main>
</body>
</html>
```
FILE: styles.css
```css
* { box-sizing: border-box; }
body { margin: 0; background: #fff; font-family: "Open Sans", "Noto Sans", sans-serif; color: #4a4c50; }
button, input, select { font: inherit; color: inherit; margin: 0; padding: 0; border: 0; background: none; border-radius: 0; min-width: 0; }
a { color: inherit; text-decoration: none; }
p { margin: 0; }
svg { display: block; fill: none; stroke: #2a2a2a; flex: none; }
use { stroke: none; }
.defs { position: absolute; width: 0; height: 0; }
.grow { flex: 1; }
.desk { display: grid; grid-template-columns: minmax(0, 1058fr) minmax(0, 826fr); gap: 44px; padding: 13px 17px 13px 12px; min-height: 100vh; }
.win { position: relative; display: flex; flex-direction: column; border: 1px solid #858585; box-shadow: 4px 4px 7px rgba(0,0,0,.5); white-space: nowrap; }

/* Rhino window */
.rhino { background: #e9eaee; font-size: 7px; line-height: 10px; }
.r-title { display: flex; align-items: center; height: 12px; padding: 0 0 0 1px; gap: 4px; }
.app { width: 9px; height: 9px; }
.controls { display: flex; }
.controls button { width: 29px; display: grid; place-items: center; }
.controls svg { width: 7px; height: 7px; stroke: #888; }
.recorder { position: absolute; top: 0; left: 446px; width: 163px; height: 13px; background: #262626; display: flex; align-items: center; justify-content: space-between; padding: 0 3px 0 9px; }
.recorder svg { width: 11px; height: 11px; stroke: #ddd; }
.recorder .bold { stroke-width: 2; }
.recorder .dim { stroke: #777; }
.r-menu { display: flex; height: 14px; align-items: center; padding-left: 4px; gap: 8px; }
.grip { width: 7px; flex: none; align-self: stretch; background: repeating-linear-gradient(#b4b5b9 0 1px, transparent 1px 4px) 3px 3px / 1px 100% no-repeat; }
.command { display: flex; height: 26px; padding-right: 1px; }
.cmd-box { flex: 1; display: flex; flex-direction: column; background: #fff; }
.cmd-history { flex: 1; border-bottom: 1px solid #dcdde2; }
.cmd-line { display: flex; height: 12px; align-items: center; font-weight: 700; color: #222; }
.cmd-line input { flex: 1; outline: 0; }
.spin { display: flex; flex-direction: column; width: 9px; align-self: stretch; border: 1px solid #d5d8e2; background: #fff; }
.spin button { flex: 1; font: 4px/4px "DejaVu Sans", sans-serif; color: #222; overflow: hidden; }
.r-tabs { display: flex; height: 12px; margin-top: 1px; background: #d6d7da; color: #8c8d91; }
.r-tabs button { padding: 0 6px; line-height: 12px; }
.r-tabs .on { background: #e9eaee; color: #6a6b70; border-radius: 3px 3px 0 0; }
.gear { width: 7px; height: 7px; }
.r-tabs .gear { margin: 2px 4px 0 auto; }
.tools { display: flex; align-items: center; height: 17px; }
.tools.first { height: 18px; border-bottom: 1px solid #d3d4d8; }
.strip { display: grid; grid-auto-flow: column; grid-auto-columns: 1fr; height: 16px; }
.std { width: 573px; }
.ten { width: 174px; }
.tools button, .palette button { display: grid; place-items: center; }
.tools svg, .palette svg { width: 13px; height: 13px; }
.f { background: linear-gradient(135deg, transparent 50%, #666 50%) right bottom / 3px 3px no-repeat; }
.rule { width: 1px; height: 13px; background: #cfd0d4; margin: 0 5px 0 2px; }
.tools .solo svg { width: 10px; height: 10px; }
.work { flex: 1; display: grid; grid-template-columns: 72px minmax(0, 1fr) 384px; margin-top: 3px; border-top: 1px solid #d3d4d8; }
.side { display: flex; flex-direction: column; }
.dots { height: 5px; line-height: 4px; text-align: center; color: #999; }
.palette { display: grid; grid-template-columns: repeat(4, 1fr); grid-template-rows: repeat(10, 1fr); width: 70px; height: 174px; }
.palette svg { stroke: #3a3a3a; }
.osnap { margin-top: auto; border-top: 1px solid #d3d4d8; padding-bottom: 88px; }
.osnap header, .koala > header { display: flex; align-items: center; justify-content: space-between; height: 11px; padding: 0 4px 0 1px; color: #8a8b90; }
.osnap-tabs { display: flex; height: 13px; background: #d6d7da; }
.osnap-tabs button { width: 23px; display: grid; place-items: center; }
.osnap-tabs .on { background: #e9eaee; }
.osnap-tabs svg { width: 10px; height: 10px; stroke: #555; }
.checks { display: grid; grid-auto-rows: 1fr; height: 141px; margin: 1px 0 0 2px; }
.checks label { display: flex; align-items: center; gap: 3px; }
.checks input { appearance: none; width: 9px; height: 9px; border: 1px solid #c9d3e6; background: #fff; display: grid; place-items: center; }
.checks input:checked::after { content: ""; width: 6px; height: 3px; border: solid #111; border-width: 0 0 1px 1px; transform: rotate(-48deg) translate(1px, 0); }

.center { display: flex; flex-direction: column; border-left: 1px solid #c3c5cb; }
.viewport { position: relative; flex: 1; background: #9ca2aa; border-bottom: 2px solid #5f666f; overflow: hidden; margin-right: 2px; }
.scene { position: absolute; inset: 0; width: 100%; height: 100%; }
.scene text { fill: #111; stroke: none; }
.head { font-size: 18px; }
.head .uval { font-size: 19px; }
.ticks { font-size: 15px; }
.axis { font-size: 8px; }
.scene .axis text { fill: #666b73; }
.view-name { position: relative; display: flex; align-items: center; height: 11px; padding-left: 4px; background: #6ea3fa; color: #1c2c4e; font-weight: 600; font-size: 8px; gap: 4px; }
.view-name svg { width: 7px; height: 7px; fill: #1c2c4e; stroke: none; border-left: 1px solid #3f6fc4; }
.view-tabs { display: flex; height: 13px; padding-left: 2px; background: #d6d7da; color: #8a8b90; }
.view-tabs button { padding: 0 4px; }
.view-tabs .on { background: #eef0f4; color: #333; padding: 0 3px; margin: 0 2px 0 1px; }
.view-tabs svg { width: 7px; height: 7px; fill: #fff; stroke: #999; stroke-width: 1; }

.koala { display: flex; flex-direction: column; }
.koala > header { border-bottom: 1px solid #d9dade; }
.k-main { flex: 1; display: flex; }
.k-body { flex: 1; display: flex; flex-direction: column; gap: 3px; padding: 6px 9px 6px 6px; min-width: 0; }
.k-list { flex: 1; background: #fff; }
.k-list table { width: 100%; table-layout: fixed; border-collapse: collapse; line-height: 15px; }
.c1 { width: 93px; } .c2 { width: 124px; } .c3 { width: 96px; }
.k-list th { font-weight: 400; text-align: left; padding: 0 0 0 3px; height: 15px; border-right: 1px solid #eceef2; border-bottom: 1px solid #dfe1e6; }
.k-list td { padding: 0 0 0 1px; height: 15px; }
.k-list .mat { color: #333; }
.mat svg, .sw { display: inline-block; width: 13px; height: 13px; vertical-align: middle; margin: 0 5px 0 1px; }
.sky { background: #8cd0fb; border: 1px solid #456; }
.fire { background: #ff4500; border: 1px solid #622; }
.sel td:not(:last-child) { background: #6cb8ff; }
.k-list .sel .mat { color: #fff; }
.k-row { display: flex; align-items: center; }
.koala .order button, .koala .acts button, .sq, .simulate, .quad button { border: 1px solid #c8d2e4; }
.order { gap: 2px; height: 14px; }
.order button { width: 19px; height: 14px; font: 7px/10px "DejaVu Sans", sans-serif; color: #222; }
.voxel { height: 13px; gap: 3px; }
.num { display: flex; height: 13px; border: 1px solid #c8d2e4; background: #fff; }
.num input { width: 40px; padding-left: 3px; outline: 0; }
.num .spin { border-width: 0 0 0 1px; }
.hint { color: #999; }
.log { display: grid; grid-template-columns: minmax(0, 1fr) 12px; grid-template-rows: 38px 11px; height: 51px; margin-bottom: 4px; border: 1px solid #c8d2e4; background: #fff; }
.log-text { display: flex; flex-direction: column; justify-content: flex-end; overflow: hidden; padding-left: 2px; font: 8px/10px Roboto, "Open Sans", sans-serif; }
.vbar { padding: 22px 4px 3px 3px; display: grid; }
.vbar i, .hbar i { background: #bdbdbd; border-radius: 3px; }
.hbar { padding: 3px 10px 3px 5px; display: grid; }
.simulate { height: 25px; }
.quad { display: grid; grid-template-columns: repeat(4, 1fr); gap: 3px; height: 19px; }
.quad button:disabled { color: #999; border-color: #dfe1e6; }
.plane { height: 15px; gap: 3px; }
.sq { width: 19px; height: 15px; display: grid; place-items: center; }
.sq svg, .acts svg { width: 10px; height: 10px; stroke: #444; }
.acts .wide { width: 15px; }
.pick { position: relative; display: flex; background: #fff; border: 1px solid #c8d2e4; }
.pick select { appearance: none; width: 100%; padding: 0 2px; outline: 0; }
.pick svg { position: absolute; right: 2px; top: 0; bottom: 0; margin: auto; width: 7px; height: 7px; pointer-events: none; color: #444; stroke: none; }
.plane .pick { width: 29px; height: 15px; }
.slide { flex: 1; padding: 0 3px 0 5px; }
.slide input { appearance: none; display: block; width: 100%; height: 10px; background: linear-gradient(#d5d6da, #d5d6da) 0 4px / 100% 2px no-repeat; }
.slide input::-webkit-slider-thumb { appearance: none; width: 7px; height: 10px; background: #fff; border: 1px solid #aaa; border-radius: 1px 1px 3px 3px; }
.notches { display: flex; justify-content: space-between; }
.notches i { width: 1px; height: 2px; background: #bbb; }
.plane .num { height: 15px; }
.plane .num input { width: 27px; }
.acts { gap: 3px; height: 19px; }
.acts button { width: 19px; height: 19px; display: grid; place-items: center; }
.k-tabs { width: 12px; margin-right: 1px; background: #d6d7da; display: grid; grid-template-rows: repeat(9, minmax(0, 201fr)) 2700fr; }
.k-tabs button { display: grid; place-items: center; }
.k-tabs .on { background: #eef0f4; }
.k-tabs svg { width: 10px; height: 10px; }
.r-status { display: flex; align-items: center; height: 14px; padding: 0 2px; color: #66686d; }
.coords { display: grid; grid-template-columns: 23px 51px 49px 62px 43px 52px 14px 103px; align-items: center; }
.pane { width: 10px; height: 10px; stroke: #444; stroke-width: 2; }
.ink { width: 10px; height: 10px; background: #000; }
.modes { flex: 1; display: flex; align-items: center; }
.modes button { padding: 0 6px; line-height: 12px; }
.modes .on { background: #ccd6ee; color: #22262e; font-weight: 700; padding: 0 5px; }
.modes span { padding-left: 8px; }
.lk { width: 9px; height: 9px; margin: 0 0 0 5px; stroke: #888; }

/* THERM window */
.therm { background: #f3f3f3; font-size: 9px; line-height: 12px; }
.logo { width: 15px; height: 14px; }
.t-title { display: flex; align-items: center; height: 24px; padding-left: 4px; gap: 5px; font-size: 10px; color: #8c8c8c; }
.big button { width: 40px; }
.big svg { width: 10px; height: 10px; }
.t-menu { display: flex; align-items: center; height: 18px; padding-left: 4px; gap: 9px; color: #2c3480; background: linear-gradient(90deg, #c6c6c6, #e8e8e8 50%, #c2c2c2); }
.t-menu .logo { margin-right: -4px; }
.mdi { margin-left: auto; display: flex; gap: 8px; padding-right: 4px; }
.mdi svg { width: 7px; height: 7px; stroke: #444; }
.t-tools { display: flex; align-items: center; height: 21px; padding: 0 7px 2px 3px; background: linear-gradient(#e6e6f1, #d2d1e0 50%, #a19eba); border-bottom: 1px solid #888; }
.t-tools button { width: 19px; height: 18px; display: grid; place-items: center; flex: none; }
.t-tools button svg { width: 13px; height: 13px; }
.t-tools > i { width: 1px; height: 12px; margin: 0 1px; background: #f4f4fa; border-left: 1px solid #a5a3b8; box-sizing: content-box; flex: none; }
.t-tools .lit { background: linear-gradient(#dcebfc, #b5d3f5 50%, #8fbcec 50%, #b5d8fb); }
.u { font-size: 13px; line-height: 14px; color: #111; }
.duo { display: flex; font: 700 8px/9px "Liberation Sans", sans-serif; color: #333; }
.duo b:first-child { padding-bottom: 4px; }
.duo b:last-child { padding-top: 4px; }
.t-tools .duo .slash { width: 4px; height: 12px; }
.combo { flex: 1; height: 16px; margin-left: 28px; background: #f0f0f0; border-color: #ccc; }
.combo svg { right: 3px; }
.t-canvas { flex: 1; display: flex; background: #fff; overflow: hidden; }
.sheet { flex: 1; padding: 150px 90px 0 51px; background: radial-gradient(circle, #999 0 0.700px, transparent 1px) 4px 3px / 33px 33px; }
.slab { height: 137px; border: solid #000; border-width: 0 3px; border-radius: 3px; background: linear-gradient(#0fdc0f, #0fdc0f) top / 100% 2px no-repeat, linear-gradient(#0f0, #0f0) bottom / 100% 2px no-repeat, linear-gradient(#400040, #f0f 15%, #50f 26%, #00f 27%, #0ff 41%, #00c000 56%, #ff0 70%, #f00 85%, #fff 99%); }
.t-vbar { width: 15px; margin-top: 4px; background: #f0f0f0; border-top: 1px solid #999; }
.t-vbar i { display: block; width: 2px; height: 74px; margin: 176px 0 0 6px; background: #8a8a8a; border-radius: 1px; }
.t-hbar { height: 15px; background: #efefef; border-left: 3px solid #b5b5b5; }
.t-info, .t-status { display: flex; align-items: center; color: #2c3480; background: linear-gradient(#d9dfec, #bac4da); }
.t-info { height: 17px; border-bottom: 1px solid #99a2b8; display: grid; grid-template-columns: 87px 98px 48px 1fr; padding: 3px 0 0 2px; }
.t-status { height: 16px; padding: 1px 16px 0 1px; gap: 4px; }
.sill { flex: 0 0 140px; }
.off { color: #978d9e; }

.dialog { position: absolute; border: 1px solid #acacac; border-radius: 6px; background: #f0f0f0; color: #333; box-shadow: 0 10px 26px rgba(0,0,0,.26); }
.dialog header { display: flex; align-items: center; justify-content: space-between; height: 24px; padding: 0 8px 0 6px; border-radius: 6px 6px 0 0; background: #f4f4f4; font-size: 10px; color: #8c8c8c; }
.legend { left: 51px; top: 82px; width: 422px; height: 89px; }
.legend-body { display: flex; padding: 5px 9px 0 1px; }
.legend-scale { width: 291px; }
.degrees { display: grid; grid-template-columns: repeat(9, 1fr); font: 11px/13px "Liberation Serif", serif; text-align: center; color: #222; }
.spectrum { width: 259px; height: 26px; margin-left: 16px; stroke: none; }
.unit { width: 41px; padding: 1px 0 0 13px; font: 9px/14px "Liberation Sans", sans-serif; }
.btn { background: #fdfdfd; border: 1px solid #d2d2d2; border-radius: 3px; }
.legend .btn { margin: 16px 0 0 auto; width: 64px; height: 20px; }
.ufactors { left: 253px; top: 359px; width: 567px; height: 253px; box-shadow: 0 8px 28px rgba(0,0,0,.45); color: #222; }
.ufactors header { color: #222; }
.ufactors header svg { width: 10px; height: 10px; }
.u-body { padding: 2px 8px 0 20px; }
.u-grid { display: grid; grid-template-columns: 88px repeat(4, 43px) 126px; column-gap: 9px; row-gap: 4px; align-items: end; line-height: 11px; font-size: 9px; }
.u-grid > label { text-align: right; align-self: center; margin-right: -3px; }
.h { text-align: center; margin-bottom: -3px; }
.u-body input:not([type]) { width: 43px; height: 18px; padding: 0 0 1px 3px; border: 1px solid #f6f6f6; border-bottom-color: #8f8f8f; font-size: 9px; outline: 0; }
.u-grid .pick { height: 16px; margin-bottom: 2px; border-color: #d5d5d5; }
.u-grid .pick svg { right: 4px; color: #777; }
.ufactors label, .ufactors legend { font-size: 9px; }
fieldset { width: 91px; height: 57px; margin: 34px 0 0; padding: 10px 0 0 14px; border: 1px solid #dfdfdf; display: flex; flex-direction: column; gap: 6px; }
legend { padding: 0 3px; margin-left: -12px; line-height: 10px; }
fieldset label { display: flex; align-items: center; gap: 2px; }
fieldset input { appearance: none; width: 12px; height: 12px; border: 1px solid #8a8a8a; border-radius: 50%; background: #f8f8f8; }
fieldset input:checked { border: 4px solid #0a5fb8; background: #fff; }
.u-foot { display: flex; align-items: flex-start; justify-content: flex-start; padding-top: 10px; }
.u-foot > label { width: 91px; margin-top: 10px; text-align: right; }
.u-foot > input:not([type]) { margin: 6px 0 0 6px; padding-left: 6px; }
.u-btns { display: grid; gap: 9px; width: 61px; margin-left: auto; margin-right: 102px; }
.u-btns .btn { height: 18px; }
.u-btns .ok { height: 19px; border-color: #5aa2dc; }
.mark { position: absolute; left: 52px; top: 21px; width: 119px; height: 80px; border: 5px solid #f00; border-radius: 13px; pointer-events: none; }
```
